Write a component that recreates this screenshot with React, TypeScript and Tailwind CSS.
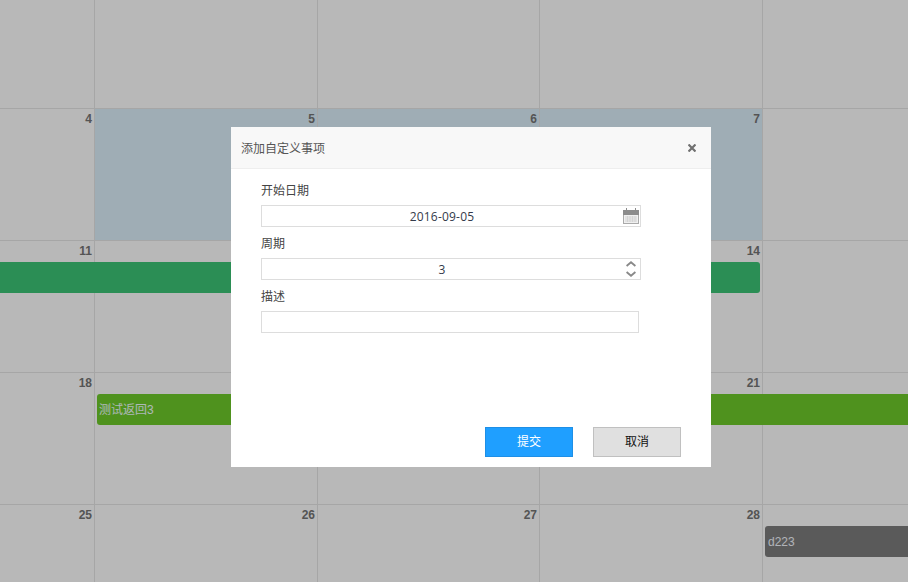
import React from 'react';

const weekGrid =
  'grid grid-cols-[95px_223px_222px_223px_145px] grid-rows-[21px_31px_1fr] border-b border-[#e6e6e6]';

function DayCell({ col, day, selected }: { col: string; day?: number; selected?: boolean }) {
  return (
    <div
      className={`${col} row-start-1 row-span-3 border-r border-[#e6e6e6] pr-[2px] pt-[3px] text-right text-[12px] leading-[14px] font-bold text-[#757575] font-['Liberation_Sans',sans-serif] ${
        selected ? 'bg-[#ddf0fb]' : ''
      }`}
    >
      {day}
    </div>
  );
}

function Week({
  days,
  height,
  selected,
  children,
}: {
  days: (number | undefined)[];
  height: string;
  selected?: boolean;
  children?: React.ReactNode;
}) {
  return (
    <div className={`${weekGrid} ${height}`}>
      <DayCell col="col-start-1" day={days[0]} />
      <DayCell col="col-start-2" day={days[1]} selected={selected} />
      <DayCell col="col-start-3" day={days[2]} selected={selected} />
      <DayCell col="col-start-4" day={days[3]} selected={selected} />
      <div className="col-start-5 row-start-1 row-span-3" />
      {children}
    </div>
  );
}

function CalendarIcon() {
  return (
    <svg width="16" height="16" viewBox="0 0 16 16" className="shrink-0">
      <rect x="0.5" y="3.5" width="15" height="12" fill="#f0f0f0" stroke="#aaaaaa" />
      <rect x="0" y="2" width="16" height="5" fill="#8c8c8c" />
      <rect x="3" y="0" width="1" height="4" fill="#8c8c8c" />
      <rect x="12" y="0" width="1" height="4" fill="#8c8c8c" />
      <path
        d="M2 9h12M2 11h12M2 13h12M4.5 8v6M7 8v6M9.5 8v6M12 8v6"
        stroke="#d4d4d4"
        strokeWidth="1"
        fill="none"
      />
    </svg>
  );
}

function Spinner() {
  return (
    <svg width="10" height="16" viewBox="0 0 10 16" className="shrink-0">
      <path d="M.6 5 5 1.2 9.4 5" fill="none" stroke="#888888" strokeWidth="1.8" />
      <path d="M.6 11 5 14.8 9.4 11" fill="none" stroke="#888888" strokeWidth="1.8" />
    </svg>
  );
}

function Field({
  label,
  value,
  width,
  icon,
  iconPos,
}: {
  label: string;
  value?: string;
  width: string;
  icon?: React.ReactNode;
  iconPos?: string;
}) {
  return (
    <div>
      <div className="h-[16px] text-[12px] leading-[16px] text-[#444444]">{label}</div>
      <div
        className={`relative mt-[6px] flex h-[22px] items-center justify-center border border-[#dddddd] pr-[18px] pt-[1px] text-[12px] tracking-[0.2px] text-[#343a4a] ${width}`}
      >
        {value}
        {icon && <span className={`absolute top-0 flex h-full items-center ${iconPos}`}>{icon}</span>}
      </div>
    </div>
  );
}

export default function App() {
  return (
    <div className="relative h-[582px] w-[908px] overflow-hidden bg-white font-['Open_Sans','Noto_Sans_CJK_SC',sans-serif]">
      {/* Calendar behind the dialog */}
      <Week days={[]} height="h-[109px]" />
      <Week days={[4, 5, 6, 7]} height="h-[132px]" selected />
      <Week days={[11, 12, 13, 14]} height="h-[132px]">
        <div className="col-start-1 col-span-4 row-start-2 mr-[3px] rounded-r-[3px] bg-[#3cc576]" />
      </Week>
      <Week days={[18, 19, 20, 21]} height="h-[132px]">
        <div className="col-start-2 col-span-4 row-start-2 ml-[2px] truncate rounded-l-[3px] bg-[#6ecb2a] pl-[2px] pt-[1px] text-[12px] leading-[30px] text-[#f0ffff] font-['Liberation_Sans','Noto_Sans_CJK_SC',sans-serif]">
          测试返回3
        </div>
      </Week>
      <Week days={[25, 26, 27, 28]} height="h-[132px]">
        <div className="col-start-5 row-start-2 ml-[2px] rounded-l-[3px] bg-[#7d7d7d] pl-[3px] pt-[1px] text-[12px] leading-[30px] text-[#f4f8ff] font-['Liberation_Sans',sans-serif]">
          d223
        </div>
      </Week>

      {/* Mask */}
      <div className="absolute inset-0 bg-black/[.28]" />

      {/* Dialog */}
      <div className="absolute left-[231px] top-[127px] flex h-[340px] w-[480px] flex-col bg-white">
        <div className="flex h-[42px] items-center justify-between border-b border-[#eeeeee] bg-[#f8f8f8] pl-[10px] pr-[15px]">
          <span className="pt-[2px] text-[12px] text-[#555555]">添加自定义事项</span>
          <svg width="8" height="8" viewBox="0 0 8 8">
            <path d="M.5.5l7 7M7.5.5l-7 7" stroke="#707070" strokeWidth="2.2" fill="none" />
          </svg>
        </div>
        <div className="flex flex-col gap-[9px] pl-[30px] pt-[14px]">
          <Field label="开始日期" value="2016-09-05" width="w-[380px]" icon={<CalendarIcon />} iconPos="right-[1px]" />
          <Field label="周期" value="3" width="w-[380px]" icon={<Spinner />} iconPos="right-[4px]" />
          <Field label="描述" width="w-[378px]" />
        </div>
        <div className="mt-auto flex justify-end gap-[20px] pb-[10px] pr-[30px]">
          <button className="h-[30px] w-[88px] border border-[#1e8fe6] bg-[#1f9fff] text-[12px] text-white">
            提交
          </button>
          <button className="h-[30px] w-[88px] border border-[#c0c0c0] bg-[#e0e0e0] text-[12px] text-[#111111]">
            取消
          </button>
        </div>
      </div>
    </div>
  );
}
